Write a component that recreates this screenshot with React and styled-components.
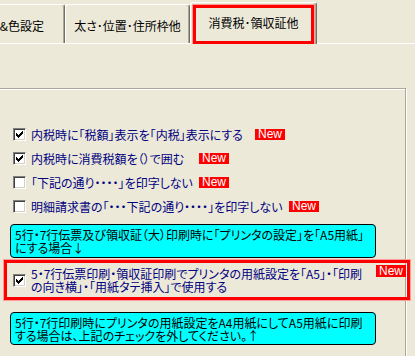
import React from 'react'
import styled, { createGlobalStyle } from 'styled-components'

const GlobalStyle = createGlobalStyle`
    html, body {
        margin: 0;
        padding: 0;
        background: #ece9d8;
    }
    body {
        font-family: "Noto Sans CJK JP", "Noto Sans", sans-serif;
        font-size: 12px;
    }
`

const Screen = styled.div`
    width: 415px;
    height: 356px;
    overflow: hidden;
    background: #ece9d8;
    font-feature-settings: "palt";
`

const TabStrip = styled.div`
    display: flex;
    align-items: flex-end;
    height: 43px;
    border-bottom: 1px solid #fff;
`

const Tab = styled.div`
    position: relative;
    box-sizing: border-box;
    display: flex;
    align-items: center;
    flex: none;
    justify-content: ${p => p.$align || 'center'};
    width: ${p => p.$width}px;
    margin-left: ${p => p.$offset || 0}px;
    height: ${p => p.$active ? 42 : 39}px;
    margin-bottom: ${p => p.$active ? -1 : 0}px;
    padding: ${p => p.$active ? '0 0 2px' : '2px 0 0'};
    padding-right: ${p => p.$padRight || 0}px;
    border-top: 1px solid #fff;
    border-left: 1px solid #fff;
    border-right: 1px solid #716f64;
    box-shadow: inset -1px 0 0 #aca899;
    border-radius: 3px 3px 0 0;
    background: #ece9d8;
    color: #000;
    line-height: 13px;
    white-space: nowrap;
    overflow: hidden;
    z-index: ${p => p.$active ? 1 : 0};
`

// red marker drawn over the selected tab
const TabMark = styled.div`
    position: absolute;
    left: 2px;
    right: 2px;
    top: 2px;
    bottom: 0;
    border: 3px solid #ff0000;
    box-shadow: 0 0 0 1px #ff9a9a;
`

const Group = styled.div`
    box-sizing: border-box;
    width: 406px;
    height: 300px;
    margin-top: 44px;
    padding-top: 39px;
    border-top: 1px solid #aca899;
    border-right: 1px solid #aca899;
    box-shadow: 1px 1px 0 #fff, inset 0 1px 0 #fff;
`

const Row = styled.label`
    display: flex;
    align-items: center;
    height: 13px;
    margin: 0 0 11px 13px;
    color: #000080;
`

const Box = styled.span`
    box-sizing: border-box;
    flex: none;
    width: 13px;
    height: 13px;
    display: flex;
    align-items: center;
    justify-content: center;
    background: #fff;
    border-top: 1px solid #808080;
    border-left: 1px solid #808080;
    border-right: 1px solid #fff;
    border-bottom: 1px solid #fff;
    box-shadow: inset 1px 1px 0 #404040, inset -1px -1px 0 #d4d0c8;
`

const Label = styled.span`
    flex: none;
    width: ${p => p.$width}px;
    margin-left: 5px;
    line-height: 13px;
    white-space: nowrap;
`

const NewBadge = styled.span`
    flex: none;
    width: 30px;
    height: ${p => p.$tall ? 12 : 11}px;
    align-self: ${p => p.$top ? 'flex-start' : 'center'};
    margin-top: ${p => p.$top ? 2 : 0}px;
    background: #ff0000;
    color: #fff;
    font-family: "Liberation Sans", Arial, sans-serif;
    font-size: 12px;
    line-height: ${p => p.$tall ? 12 : 11}px;
    text-align: center;
`

const Note = styled.div`
    box-sizing: border-box;
    width: 366px;
    margin: ${p => p.$top || 0}px 0 0 10px;
    padding: ${p => p.$tight ? '3px 4px 2px' : '3px 4px'};
    border: 1px solid #000;
    border-radius: 4px;
    background: #00ffff;
    color: #000;
    line-height: 13px;
    white-space: nowrap;
`

const MarkedRow = styled.label`
    box-sizing: border-box;
    display: flex;
    align-items: center;
    width: 406px;
    height: 40px;
    margin: 2px 0 0 4px;
    padding-left: 6px;
    border: 3px solid #ff0000;
    box-shadow: 0 0 0 1px #ff9a9a;
    color: #000080;
`

const Tick = () => (
    <svg width="7" height="7" viewBox="0 0 7 7" shapeRendering="crispEdges">
        <path fill="#000" d="M0 2h1v3h-1z M1 3h1v3h-1z M2 4h1v3h-1z M3 3h1v3h-1z M4 2h1v3h-1z M5 1h1v3h-1z M6 0h1v3h-1z" />
    </svg>
)

const CheckBox = ({ checked }) => (
    <Box>{checked ? <Tick /> : null}</Box>
)

const rows = [
    { text: '内税時に「税額」表示を「内税」表示にする', checked: true, width: 224 },
    { text: '内税時に消費税額を（）で囲む', checked: true, width: 168 },
    { text: '「下記の通り・・・・」を印字しない', checked: false, width: 168 },
    { text: '明細請求書の「・・・下記の通り・・・・」を印字しない', checked: false, width: 258 },
]

export default function App() {
    return (
        <Screen>
            <GlobalStyle />
            <TabStrip>
                <Tab $width={80} $offset={-15} $align="flex-end" $padRight={20}>文字&色設定</Tab>
                <Tab $width={125}>太さ･位置･住所枠他</Tab>
                <Tab $width={127} $active>
                    消費税･領収証他
                    <TabMark />
                </Tab>
            </TabStrip>
            <Group>
                {rows.map(r => (
                    <Row key={r.text}>
                        <CheckBox checked={r.checked} />
                        <Label $width={r.width}>{r.text}</Label>
                        <NewBadge>New</NewBadge>
                    </Row>
                ))}
                <Note>
                    5行・7行伝票及び領収証（大）印刷時に「プリンタの設定」を「A5用紙」<br />
                    にする場合↓
                </Note>
                <MarkedRow>
                    <CheckBox checked />
                    <Label $width={345}>
                        5・7行伝票印刷・領収証印刷でプリンタの用紙設定を「A5」・「印刷<br />
                        の向き横」・「用紙タテ挿入」で使用する
                    </Label>
                    <NewBadge $top $tall>New</NewBadge>
                </MarkedRow>
                <Note $top={12} $tight>
                    5行・7行印刷時にプリンタの用紙設定をA4用紙にしてA5用紙に印刷<br />
                    する場合は、上記のチェックを外してください。↑
                </Note>
            </Group>
        </Screen>
    )
}
